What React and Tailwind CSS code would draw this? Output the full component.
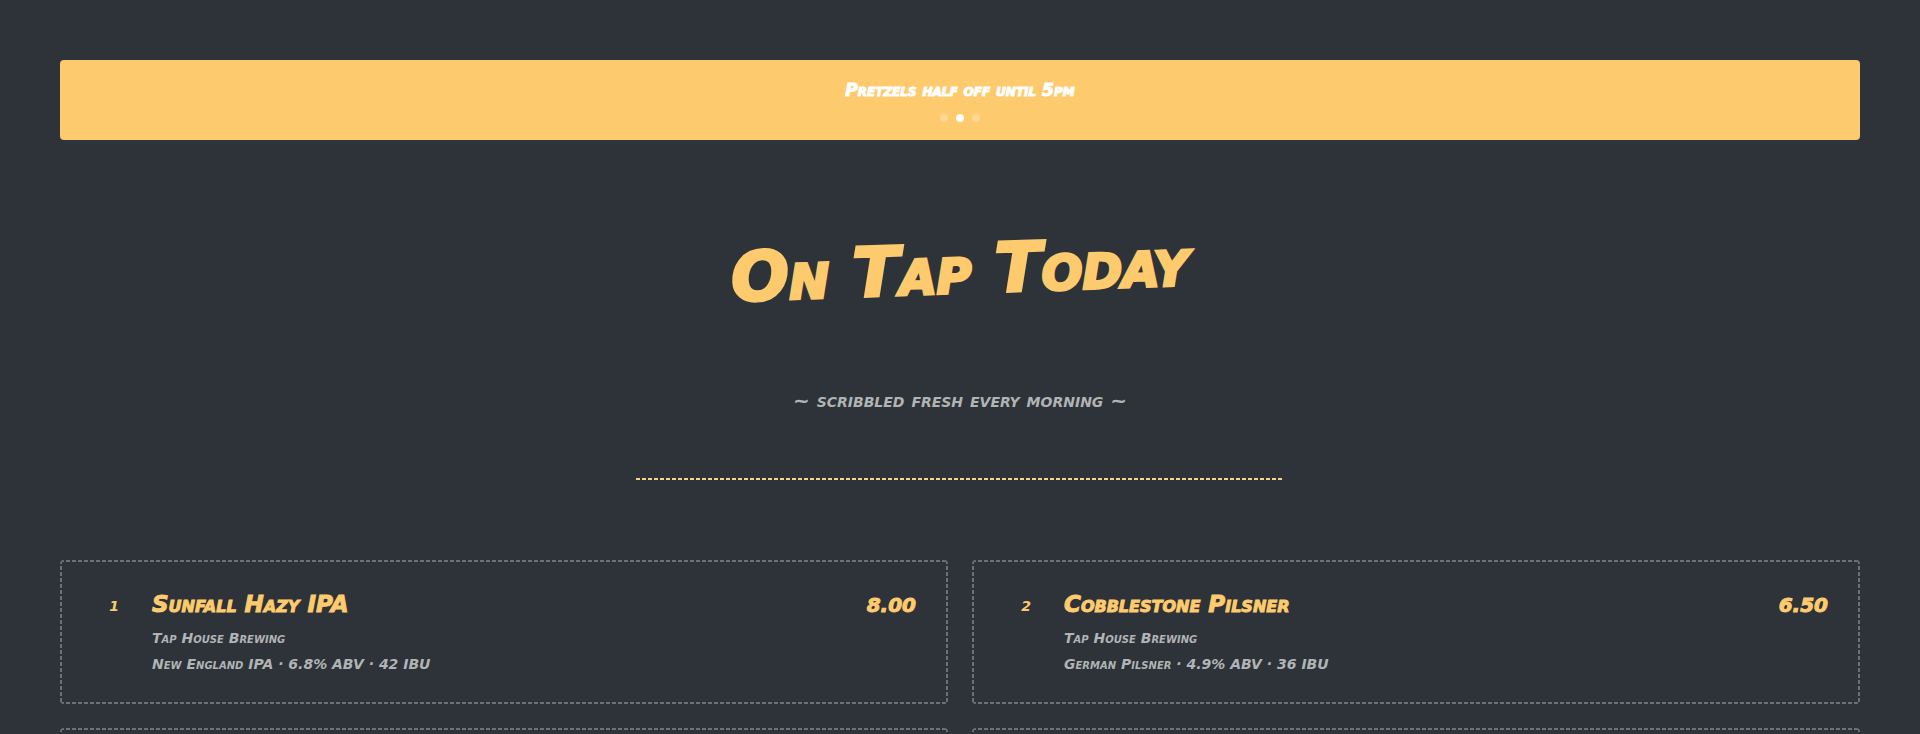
import React, { useState } from "react";

const BEERS = [
  { id: 1, name: "Sunfall Hazy IPA", brewery: "Tap House Brewing", details: "New England IPA · 6.8% ABV · 42 IBU", price: "8.00" },
  { id: 2, name: "Cobblestone Pilsner", brewery: "Tap House Brewing", details: "German Pilsner · 4.9% ABV · 36 IBU", price: "6.50" },
  { id: 3 },
  { id: 4 },
];

// short 4px dashes with 2px gaps on all four edges, tighter than border-dashed
const DASHED_BOX =
  "[background-image:repeating-linear-gradient(90deg,#6b7174_0_4px,transparent_4px_6px),repeating-linear-gradient(90deg,#6b7174_0_4px,transparent_4px_6px),repeating-linear-gradient(180deg,#6b7174_0_4px,transparent_4px_6px),repeating-linear-gradient(180deg,#6b7174_0_4px,transparent_4px_6px)] [background-size:100%_2px,100%_2px,2px_100%,2px_100%] [background-position:top,bottom,left,right] bg-no-repeat";

const Banner = () => {
  const [active, setActive] = useState(1);

  return (
    <section className="flex flex-col items-center gap-2.5 rounded bg-[#fdcb6e] pt-4 pb-[18px] text-white">
      <p className="text-[17px] leading-7 [-webkit-text-stroke:1px]">Pretzels half off until 5pm</p>
      <div className="flex gap-2">
        {[0, 1, 2].map((i) => (
          <button
            key={i}
            type="button"
            aria-label={`Slide ${i + 1}`}
            onClick={() => setActive(i)}
            className={`size-2 rounded-full ${i === active ? "bg-white" : "bg-white/25"}`}
          />
        ))}
      </div>
    </section>
  );
};

const BeerCard = ({ beer }) => (
  <li className={`flex min-h-36 items-start gap-4 rounded px-8 py-[26px] ${DASHED_BOX}`}>
    {beer.name && (
      <>
        <span className="w-11 shrink-0 text-center text-sm leading-10 text-[#fdcb6e]">{beer.id}</span>
        <div className="flex-1 text-[#b1b4b5]">
          <h2 className="mb-1 text-[23px] leading-9 text-[#fdcb6e] [-webkit-text-stroke:1px]">{beer.name}</h2>
          <p className="text-sm leading-6">{beer.brewery}</p>
          <p className="text-sm leading-7">{beer.details}</p>
        </div>
        <span className="text-xl leading-[38px] text-[#fdcb6e] [-webkit-text-stroke:1px]">{beer.price}</span>
      </>
    )}
  </li>
);

export default function App() {
  return (
    <main className="h-screen overflow-hidden bg-[#2d3338] p-[60px] font-['Permanent_Marker','DejaVu_Sans',cursive] font-bold italic [font-variant-caps:small-caps]">
      <Banner />

      <header className="mb-20 flex flex-col items-center pt-20 text-center">
        <h1 className="-rotate-2 text-[68px] leading-[100px] text-[#fdcb6e] [-webkit-text-stroke:3px] [stroke-linejoin:round]">
          On Tap Today
        </h1>
        <p className="mt-16 text-xl leading-8 text-[#b1b4b5]">~ scribbled fresh every morning ~</p>
        <hr className="mt-[62px] h-0.5 w-[36%] border-0 [background-image:repeating-linear-gradient(90deg,#f3d588_0_4px,transparent_4px_6px)]" />
      </header>

      <ul className="grid grid-cols-2 gap-6">
        {BEERS.map((beer) => (
          <BeerCard key={beer.id} beer={beer} />
        ))}
      </ul>
    </main>
  );
}
